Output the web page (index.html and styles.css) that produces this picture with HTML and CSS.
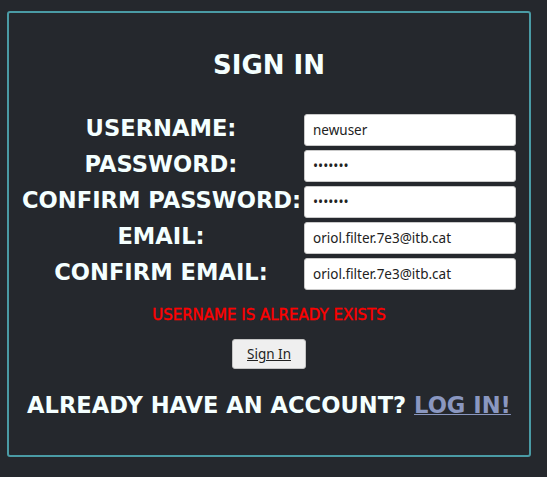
FILE: index.html
```html
<!DOCTYPE html>
<html lang="en">
<head>
<meta charset="utf-8">
<title>Sign In</title>
<link rel="stylesheet" href="styles.css">
</head>
<body>
  <div class="card">
    <h1 class="title">SIGN IN</h1>
    <form class="form">
      <div class="fields">
        <label class="label">USERNAME:</label>
        <input class="input" type="text" value="newuser">
        <label class="label">PASSWORD:</label>
        <input class="input" type="password" value="1234567">
        <label class="label">CONFIRM PASSWORD:</label>
        <input class="input" type="password" value="1234567">
        <label class="label">EMAIL:</label>
        <input class="input" type="text" value="oriol.filter.7e3@itb.cat">
        <label class="label">CONFIRM EMAIL:</label>
        <input class="input" type="text" value="oriol.filter.7e3@itb.cat">
      </div>
      <p class="error">USERNAME IS ALREADY EXISTS</p>
      <div class="actions"><button class="btn" type="button">Sign In</button></div>
    </form>
    <p class="footer">ALREADY HAVE AN ACCOUNT? <a class="link" href="#">LOG IN!</a></p>
  </div>
</body>
</html>
```

FILE: styles.css
```css
html, body {
  margin: 0;
  padding: 0;
  background: #25282d;
}

body {
  font-family: "DejaVu Sans", sans-serif;
  color: #f4ffff;
}

.card {
  box-sizing: border-box;
  width: 524px;
  height: 446px;
  margin: 11px 0 0 7px;
  border: 2px solid #4a9ba5;
  border-radius: 3px;
  padding: 37px 0 0 0;
  display: flex;
  flex-direction: column;
  align-items: center;
}

.title {
  margin: 0;
  font-size: 26px;
  line-height: 30px;
  font-weight: 700;
}

.form {
  margin: 34px 0 0 0;
  display: flex;
  flex-direction: column;
  align-items: center;
}

.fields {
  display: grid;
  grid-template-columns: 278px 212px;
  grid-auto-rows: 32px;
  column-gap: 4px;
  row-gap: 4px;
  align-items: center;
}

.label {
  text-align: center;
  font-size: 22.6px;
  font-weight: 700;
  line-height: 28px;
  white-space: nowrap;
  padding-bottom: 5px;
}

.input {
  box-sizing: border-box;
  width: 212px;
  height: 32px;
  margin: 0;
  padding: 0 8px;
  border: 1px solid #c9c9c9;
  border-radius: 3px;
  background: #fff;
  color: #222;
  font-family: "Noto Sans", "Open Sans", sans-serif;
  font-size: 13.5px;
}

.error {
  margin: 16px 0 0 0;
  color: #ff0000;
  font-size: 15px;
  line-height: 18px;
  -webkit-text-stroke: 0.4px #ff0000;
}

.actions {
  margin-top: 15px;
}

.btn {
  box-sizing: border-box;
  width: 74px;
  height: 30px;
  margin: 0;
  padding: 0;
  border: 1px solid #c4c4c4;
  border-radius: 3px;
  background: #efefef;
  color: #222;
  font-family: "Noto Sans", "Open Sans", sans-serif;
  font-size: 13.5px;
  text-decoration: underline;
}

.footer {
  margin: 23px 0 0 0;
  font-size: 22.6px;
  line-height: 27px;
  font-weight: 700;
  white-space: nowrap;
}

.link {
  color: #8a97c0;
  text-decoration: underline;
  text-decoration-thickness: 1px;
}
```
